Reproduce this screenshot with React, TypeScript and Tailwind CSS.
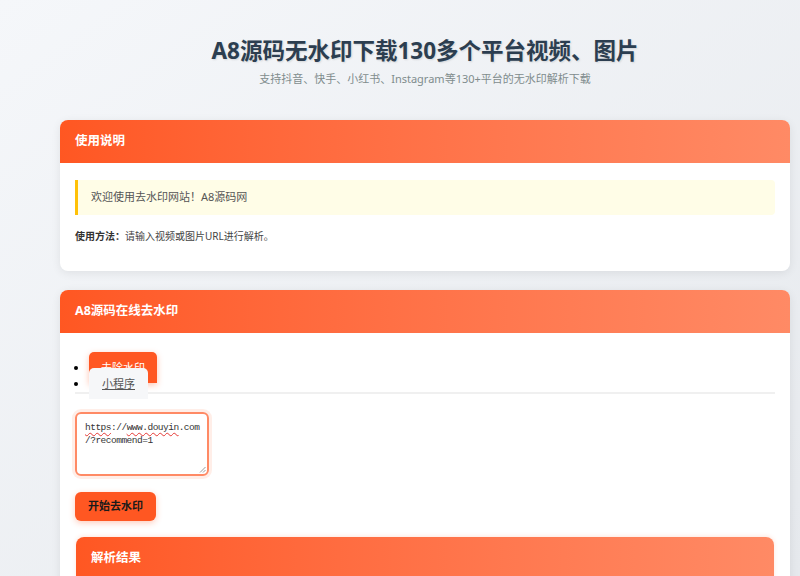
import React from "react";

const cjk = { fontFamily: '"Noto Sans", "Noto Sans CJK SC", sans-serif' };

function CardHeader({ title }: { title: string }) {
  return (
    <div className="h-[43px] flex items-center px-[15px] bg-gradient-to-r from-[#ff5722] to-[#ff8a65] rounded-t-[8px]">
      <h2 className="text-white text-[12.5px] font-bold">{title}</h2>
    </div>
  );
}

export default function App() {
  return (
    <div
      className="h-screen overflow-hidden bg-gradient-to-br from-[#f5f7fa] to-[#e6e9ed]"
      style={cjk}
    >
      <div className="w-[850px] px-[60px] pt-[36px]">
        {/* Page title */}
        <div className="text-center">
          <h1 className="text-[22.5px] leading-[30px] font-bold text-[#2c3e50] [text-shadow:1px_1px_2px_rgba(0,0,0,0.12)]">
            A8源码无水印下载130多个平台视频、图片
          </h1>
          <p className="mt-[5px] text-[11px] leading-[16px] text-[#7f8c8d]">
            支持抖音、快手、小红书、Instagram等130+平台的无水印解析下载
          </p>
        </div>

        {/* Usage card */}
        <div className="mt-[33px] bg-white rounded-[8px] shadow-[0_2px_10px_rgba(0,0,0,0.08)]">
          <CardHeader title="使用说明" />
          <div className="px-[15px] pt-[17px] pb-[27px]">
            <div className="h-[35px] flex items-center pl-[13px] bg-[#fffde7] border-l-[3px] border-[#ffc107] rounded-r-[4px] text-[11px] text-[#555]">
              欢迎使用去水印网站！A8源码网
            </div>
            <p className="mt-[13px] text-[10px] leading-[16px] text-[#444]">
              <strong className="text-[#333]">使用方法：</strong>请输入视频或图片URL进行解析。
            </p>
          </div>
        </div>

        {/* Tool card */}
        <div className="mt-[19px] bg-white rounded-[8px] shadow-[0_2px_10px_rgba(0,0,0,0.08)]">
          <CardHeader title="A8源码在线去水印" />
          <div className="px-[15px] pt-[27px] pb-[20px]">
            <ul className="list-disc pl-[14px] border-b-2 border-[#f0f0f0] text-[11px] leading-[16px]">
              <li>
                <a className="px-[12px] py-[8px] rounded-t-[5px] bg-[#ff5722] text-white shadow-[0_2px_6px_rgba(255,87,34,0.35)]">
                  去除水印
                </a>
              </li>
              <li>
                <a className="px-[13px] py-[8px] rounded-t-[5px] bg-[#f6f7f9] text-[#555] underline">
                  小程序
                </a>
              </li>
            </ul>

            <div className="relative mt-[18px] w-[134px] h-[64px] border-2 border-[#ff8a65] rounded-[6px] shadow-[0_0_0_3px_rgba(255,87,34,0.1)] px-[8px] pt-[8px]">
              <div
                className="text-[9.5px] leading-[12.5px] tracking-[-0.5px] text-[#333]"
                style={{ fontFamily: '"Liberation Mono", monospace' }}
              >
                <span className="underline decoration-wavy decoration-[#e53935] decoration-1 underline-offset-2">https</span>
                ://
                <span className="underline decoration-wavy decoration-[#e53935] decoration-1 underline-offset-2">www.douyin</span>
                .com
                <br />
                /?recommend=1
              </div>
              <svg className="absolute right-[1px] bottom-[1px]" width="7" height="7" viewBox="0 0 7 7">
                <path d="M6.5 1 L1 6.5 M6.5 4 L4 6.5" stroke="#999" strokeWidth="1" />
              </svg>
            </div>

            <button className="mt-[16px] h-[29px] px-[13px] rounded-[6px] bg-[#ff5722] text-[11px] font-bold text-[#1a1a1a] shadow-[0_2px_6px_rgba(255,87,34,0.3)]">
              开始去水印
            </button>

            {/* Result card */}
            <div className="mt-[16px] mx-[1px] rounded-[8px] bg-white shadow-[0_-1px_4px_rgba(255,87,34,0.15)]">
              <CardHeader title="解析结果" />
              <div className="p-[15px] h-[80px]" />
            </div>
          </div>
        </div>
      </div>
    </div>
  );
}
